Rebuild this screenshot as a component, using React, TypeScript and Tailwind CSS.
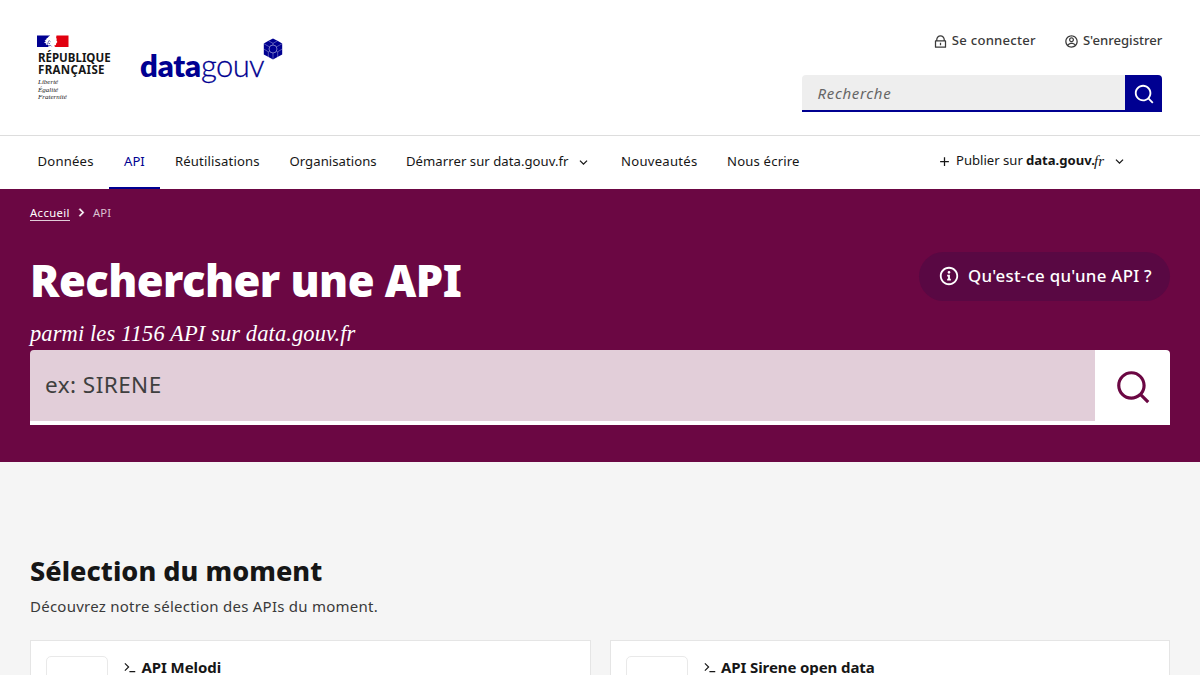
import type { ReactNode } from 'react';
import {
  RiAccountCircleLine,
  RiAddLine,
  RiArrowDownSLine,
  RiArrowRightSLine,
  RiInformation2Line,
  RiLockLine,
  RiSearchLine,
  RiTerminalLine,
} from 'react-icons/ri';

function Flag() {
  return (
    <svg width="32" height="12" viewBox="0 0 32 12" className="block">
      <rect width="31.500" height="12" fill="#fff" />
      <path d="M0 .5h13.200c-1.200.6-2 1.300-2.500 2.200l-1.700.9 1 .2-2.500 1.900 1.500.2-2 1.900 1.700.3.300 1.600 1.500-.3 1.200.8-.4 1.800H0z" fill="#000091" />
      <path d="M19.500.5h12V12H18.300l-1.300-1.300 1.900-.6.300-1.500.5-.9.700-.6-.9-1.600.2-1.600-.6-1.500z" fill="#e1000f" />
      <path d="M11 6.500l1.500-.7 1 .9M9.800 8.200l2-.2 1.200 1M12 10.800l1.600-.4 1 1" stroke="#4a4aa5" strokeWidth=".9" fill="none" />
    </svg>
  );
}

function CubeMark() {
  return (
    <svg width="20" height="22" viewBox="0 0 20 22" className="absolute left-[123.200px] top-[-1px]">
      <path d="M10 .5l4.500 2.300L19.200 5.600v10.800L14.500 19 10 21.500 5.500 19 .8 16.400V5.600L5.500 2.800z" fill="#000091" />
      <g stroke="#fff" strokeWidth=".5" strokeOpacity=".65" fill="none">
        <path d="M5.500 2.800L10 5.400l4.500-2.600M10 5.400V7M.8 5.700l4.500 2.500M19.200 5.700l-4.500 2.500M5.300 8.200l1.300.8M14.700 8.200l-1.300.8M.8 11l4.500 2.800M19.200 11l-4.500 2.800M5.300 13.800V19M14.700 13.800V19M10 15v6.500M5.300 13.800l1.300-.8M14.700 13.800l-1.300-.8" />
      </g>
      <circle cx="10" cy="11" r="4" fill="#000091" stroke="#aaaadd" strokeWidth=".7" />
    </svg>
  );
}

function NavItem({ children, className = '', active = false }: { children: ReactNode; className?: string; active?: boolean }) {
  return (
    <a
      href="#"
      className={`flex h-full shrink-0 items-center whitespace-nowrap border-b-2 px-[15px] pt-px ${
        active ? 'border-b-[#000091] text-[#000091]' : 'border-b-transparent'
      } ${className}`}
    >
      {children}
    </a>
  );
}

function Card({ title, spacing }: { title: string; spacing: string }) {
  return (
    <article className="flex h-[130px] flex-1 gap-[15px] border border-[#e5e5e5] bg-white px-[15px] pt-[15px]">
      <div className="size-[62px] shrink-0 rounded-[5px] border border-[#e9e9e9] bg-white" />
      <h3 className={`flex h-[23px] items-center gap-[4.500px] text-[15px] font-bold leading-none text-[#161616] ${spacing}`}>
        <RiTerminalLine className="size-[14px]" />
        {title}
      </h3>
    </article>
  );
}

export default function App() {
  return (
    <div className="h-[675px] w-[1200px] overflow-hidden bg-[#f5f5f5] font-['Noto_Sans',sans-serif] text-[13.125px] text-[#161616]">
      <header className="bg-white">
        <div className="flex h-[136px] items-start justify-between border-b border-[#dddddd] pl-[37.400px] pr-[37.600px]">
          <div className="flex">
            <div className="w-[102.600px] pt-[35px]">
              <Flag />
              <p className="mt-[5px] pl-[0.600px] text-[11.500px] font-bold leading-[12px]">
                RÉPUBLIQUE
                <br />
                <span className="tracking-[0.350px]">FRANÇAISE</span>
              </p>
              <p className="mt-[3px] pl-[0.600px] font-['Liberation_Serif',serif] text-[7px] italic leading-[7.500px] text-[#222]">
                Liberté
                <br />
                Égalité
                <br />
                Fraternité
              </p>
            </div>
            <div className="relative mt-[39px] h-[50px] font-['Lato',sans-serif] text-[31px] leading-[53px] text-[#000091]">
              <span className="font-[800] tracking-[-0.150px]">data</span>
              <span className="font-light tracking-[-0.600px] [-webkit-text-stroke:0.3px_#000091]">gouv</span>
              <CubeMark />
            </div>
          </div>
          <div className="w-[360px]">
            <div className="flex h-[75px] items-start justify-end pt-[31px] font-medium text-[#3a3a3a]">
              <a href="#" className="flex h-[19px] items-center gap-1 whitespace-nowrap tracking-[0.250px]">
                <RiLockLine className="mt-0.5 size-[15px]" />
                Se connecter
              </a>
              <a href="#" className="ml-[28px] flex h-[19px] items-center gap-1 whitespace-nowrap">
                <RiAccountCircleLine className="mt-0.5 size-[15px]" />
                S'enregistrer
              </a>
            </div>
            <div className="flex h-[37.400px]">
              <div className="flex flex-1 items-center rounded-tl border-b-2 border-[#000091] bg-[#eeeeee] pl-[15px] pt-[2px] text-[15px] italic tracking-[0.700px] text-[#666666]">
                Recherche
              </div>
              <button className="flex w-[37.500px] items-center justify-center rounded-tr bg-[#000091] text-white">
                <RiSearchLine className="size-[22px]" />
              </button>
            </div>
          </div>
        </div>
        <nav className="flex h-[52.600px] pl-[22.500px]">
          <NavItem className="w-[86.500px] tracking-[0.200px]">Données</NavItem>
          <NavItem className="w-[51px]" active>API</NavItem>
          <NavItem className="w-[114.500px] tracking-[0.150px]">Réutilisations</NavItem>
          <NavItem className="w-[116.500px] tracking-[0.050px]">Organisations</NavItem>
          <NavItem className="w-[215px] tracking-[0.050px]">
            Démarrer sur data.gouv.fr
            <RiArrowDownSLine className="ml-[7px] mt-0.5 size-[15px] shrink-0" />
          </NavItem>
          <NavItem className="w-[106px] tracking-[0.250px]">Nouveautés</NavItem>
          <NavItem className="w-[103px] tracking-[0.180px]">Nous écrire</NavItem>
          <button className="ml-[122px] flex h-[50px] items-center whitespace-nowrap">
            <RiAddLine className="mr-[4px] size-[15px]" />
            Publier sur
            <span className="ml-[3px] font-bold">data.gouv.</span>
            <span className="ml-[-1px] font-['Liberation_Serif',serif] text-[15px] italic tracking-[0.300px]">fr</span>
            <RiArrowDownSLine className="ml-[7px] size-[15px]" />
          </button>
        </nav>
      </header>

      <section className="h-[273.400px] bg-[#6b0743] px-[30px] text-white">
        <div className="flex h-[48px] items-center text-[11.250px] leading-none">
          <a href="#" className="border-b border-white/80 pb-[2px] pt-[3px] tracking-[0.400px]">Accueil</a>
          <RiArrowRightSLine className="ml-1 size-[15px] stroke-[0.800px]" />
          <span className="ml-1 tracking-[0.150px] text-white/75">API</span>
        </div>
        <div className="flex h-[80px] justify-between">
          <h1 className="ml-[-1px] mt-[13px] whitespace-nowrap pl-px text-[43.500px] font-black leading-[60px] tracking-[-0.550px]">
            Rechercher une API
          </h1>
          <button className="mt-[15px] flex h-[49px] w-[251px] items-center whitespace-nowrap rounded-full bg-[#590843] pb-px pl-[19px] text-[16.875px] font-medium tracking-[0.280px]">
            <RiInformation2Line className="mr-2 mt-px size-[22px]" />
            Qu'est-ce qu'une API ?
          </button>
        </div>
        <p className="flex h-[33px] items-center pt-[1px] font-['Liberation_Serif',serif] text-[22.500px] italic leading-[34px] tracking-[0.100px]">
          parmi les 1156 API sur data.gouv.fr
        </p>
        <div className="flex h-[75px]">
          <div className="flex flex-1 items-center rounded-tl border-b-4 border-white bg-[#e2ced9] pl-[15px] text-[22.500px] tracking-[0.450px] text-[#3f3f3f]">
            ex: SIRENE
          </div>
          <button className="flex w-[75px] items-center justify-center rounded-tr bg-white text-[#6b0743]">
            <RiSearchLine className="size-[38px]" />
          </button>
        </div>
      </section>

      <main className="px-[30px] pt-[91px]">
        <h2 className="text-[27px] font-[800] leading-[36px] tracking-[0.050px]">Sélection du moment</h2>
        <p className="mt-[5px] text-[15px] leading-[24px] tracking-[0.250px] text-[#3a3a3a]">Découvrez notre sélection des APIs du moment.</p>
        <div className="mt-[22px] flex gap-[19px]">
          <Card title="API Melodi" spacing="tracking-[-0.080px]" />
          <Card title="API Sirene open data" spacing="tracking-[-0.100px]" />
        </div>
      </main>
    </div>
  );
}
